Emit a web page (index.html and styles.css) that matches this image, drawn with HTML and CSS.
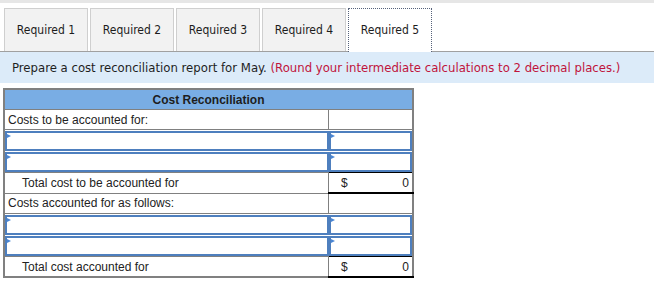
FILE: index.html
```html
<!DOCTYPE html>
<html>
<head>
    <title>Cost Reconciliation</title>
    <link rel="stylesheet" href="styles.css">
</head>
<body>
    <div class="topbar"></div>
    <div class="tabs">
        <div class="tab">Required 1</div>
        <div class="tab">Required 2</div>
        <div class="tab">Required 3</div>
        <div class="tab">Required 4</div>
        <div class="tab active">Required 5</div>
    </div>
    <div class="instruction">
        Prepare a cost reconciliation report for May. <span class="note">(Round your intermediate calculations to 2 decimal places.)</span>
    </div>
    <table class="report">
        <tr>
            <th colspan="2">Cost Reconciliation</th>
        </tr>
        <tr>
            <td class="label">Costs to be accounted for:</td>
            <td class="amount"></td>
        </tr>
        <tr class="entry-row">
            <td><div class="entry"></div></td>
            <td><div class="entry"></div></td>
        </tr>
        <tr class="entry-row">
            <td><div class="entry"></div></td>
            <td><div class="entry"></div></td>
        </tr>
        <tr>
            <td class="label total">Total cost to be accounted for</td>
            <td class="amount sum"><span>$</span><span>0</span></td>
        </tr>
        <tr>
            <td class="label">Costs accounted for as follows:</td>
            <td class="amount"></td>
        </tr>
        <tr class="entry-row">
            <td><div class="entry"></div></td>
            <td><div class="entry"></div></td>
        </tr>
        <tr class="entry-row">
            <td><div class="entry"></div></td>
            <td><div class="entry"></div></td>
        </tr>
        <tr>
            <td class="label total">Total cost accounted for</td>
            <td class="amount sum"><span>$</span><span>0</span></td>
        </tr>
    </table>
</body>
</html>
```

FILE: styles.css
```css
body {
    margin: 0;
    padding: 0;
    background-color: #ffffff;
    font-family: "DejaVu Sans", Tahoma, sans-serif;
    color: #222;
}
.topbar {
    height: 3px;
    background-color: #e6e6e6;
}
/* tab strip */
.tabs {
    display: flex;
    gap: 2px;
    padding: 5px 0 0 4px;
    border-bottom: 1px solid #a0a0a0;
}
.tab {
    box-sizing: border-box;
    width: 84px;
    height: 43px;
    border: 1px solid #cfcfcf;
    border-bottom: none;
    background-color: #f2f2f2;
    font-size: 12px;
    font-stretch: condensed;
    display: flex;
    align-items: center;
    justify-content: center;
    color: #1c1c1c;
}
.tab.active {
    height: 44px;
    margin-bottom: -1px;
    padding-bottom: 2px;
    background-color: #ffffff;
    border: 1px dotted #56627a;
    border-bottom: none;
}
.instruction {
    height: 31px;
    line-height: 31px;
    padding-left: 12px;
    background-color: #dcebf9;
    font-size: 13px;
    font-stretch: condensed;
    color: #1f1f1f;
}
.note {
    color: #c0143c;
}
/* report table */
.report {
    margin: 5px 0 0 3px;
    width: 411px;
    border-collapse: collapse;
    border: 2px solid #808080;
    font-family: "Liberation Sans", Arial, sans-serif;
    font-size: 12px;
}
.report th {
    height: 19px;
    padding: 0;
    background-color: #79ade4;
    border-bottom: 1px solid #808080;
    font-weight: bold;
    color: #1d1d1d;
    text-align: center;
}
.report td {
    height: 19px;
    padding: 0;
    border: 1px solid #808080;
}
.report td.label {
    padding-left: 3px;
}
.report td.total {
    padding-left: 17px;
}
.report td.amount {
    width: 83px;
}
.report td.sum {
    border-top: 1px solid #000;
    border-bottom: 2px solid #000;
}
.sum span:first-child {
    float: left;
    padding-left: 12px;
}
.sum span:last-child {
    float: right;
    padding-right: 3px;
}
.report .entry-row td {
    height: auto;
    border: none;
    padding: 0;
}
.entry {
    position: relative;
    box-sizing: border-box;
    height: 20px;
    margin-top: 1px;
    border: 2px solid #4e7fbe;
}
/* small marker at the corner of each entry box */
.entry::before {
    content: "";
    position: absolute;
    left: 0;
    top: 1px;
    border-left: 4px solid #4a86d4;
    border-top: 2px solid transparent;
    border-bottom: 2px solid transparent;
}
```
